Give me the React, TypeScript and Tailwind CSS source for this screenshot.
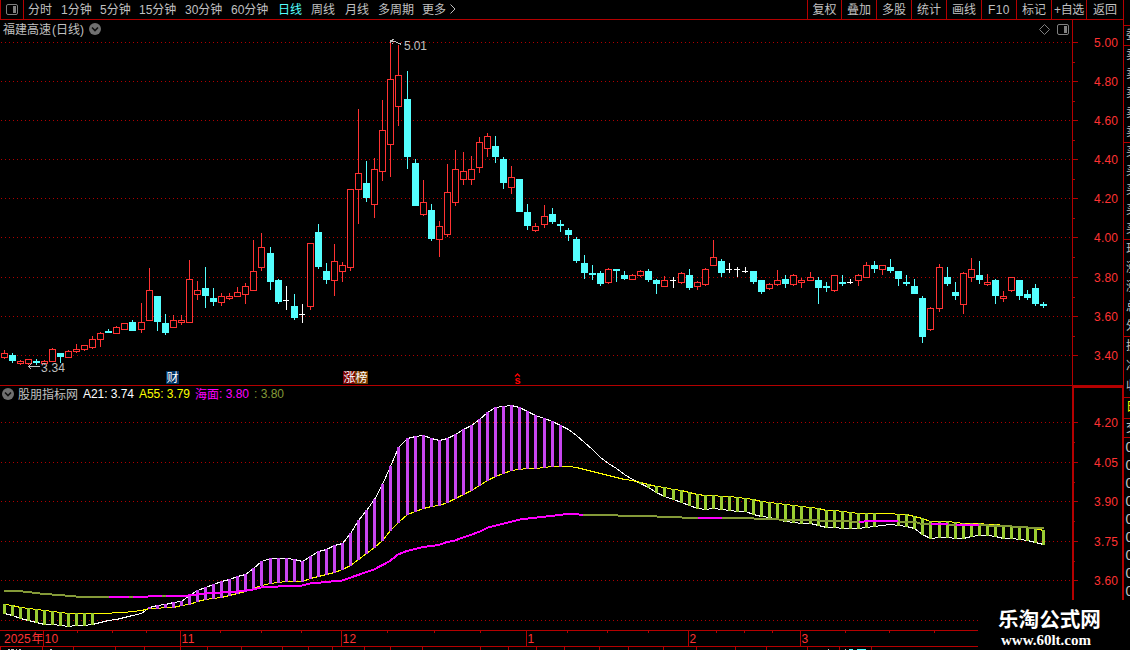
import React from "react";

type Kind = "r" | "c" | "w";
type Candle = [Kind, number, number, number, number];

// kind, high, body top, body bottom, low
const candles: Candle[] = [
  ["r", 350, 353, 357, 358], ["c", 353, 355, 360, 362], ["r", 360, 361, 363, 364], ["r", 359, 359, 363, 364],
  ["c", 359, 361, 362, 364], ["r", 360, 361, 363, 364], ["r", 348, 349, 361, 361], ["c", 353, 353, 356, 362],
  ["r", 350, 351, 357, 357], ["r", 344, 349, 351, 352], ["r", 345, 345, 349, 350], ["r", 336, 339, 347, 348],
  ["r", 332, 333, 339, 346], ["c", 329, 331, 332, 332], ["r", 326, 327, 333, 333], ["r", 323, 323, 329, 329],
  ["c", 320, 322, 330, 330], ["r", 303, 322, 329, 332], ["r", 268, 290, 320, 320], ["c", 296, 296, 321, 330],
  ["c", 314, 323, 332, 334], ["r", 315, 320, 327, 327], ["r", 315, 320, 322, 324], ["r", 260, 279, 322, 322],
  ["r", 281, 290, 294, 299], ["c", 267, 288, 295, 307], ["c", 288, 298, 301, 305], ["r", 293, 296, 302, 305],
  ["r", 293, 296, 298, 299], ["r", 287, 292, 296, 296], ["r", 283, 286, 294, 303], ["r", 240, 271, 290, 290],
  ["r", 233, 247, 267, 270], ["c", 247, 253, 281, 289], ["c", 279, 280, 301, 303], ["w", 286, 300, 300, 309],
  ["c", 294, 306, 317, 319], ["w", 304, 314, 314, 322], ["r", 243, 243, 306, 309], ["c", 224, 232, 266, 268],
  ["c", 263, 271, 279, 283], ["r", 244, 261, 280, 295], ["r", 262, 265, 271, 281], ["r", 189, 189, 267, 270],
  ["r", 109, 173, 189, 223], ["c", 161, 183, 197, 201], ["r", 158, 169, 204, 217], ["r", 100, 130, 171, 180],
  ["r", 42, 79, 144, 176], ["r", 45, 75, 106, 125], ["c", 71, 99, 156, 168], ["c", 159, 163, 205, 205],
  ["r", 180, 202, 214, 215], ["c", 204, 210, 238, 240], ["r", 221, 226, 239, 256], ["r", 164, 192, 234, 236],
  ["r", 150, 169, 202, 205], ["r", 152, 171, 179, 184], ["r", 156, 169, 179, 184], ["r", 137, 142, 167, 172],
  ["r", 133, 136, 148, 156], ["c", 136, 146, 156, 162], ["c", 157, 159, 182, 188], ["r", 166, 177, 187, 193],
  ["c", 179, 179, 211, 211], ["c", 204, 212, 225, 229], ["r", 223, 226, 230, 231], ["r", 205, 216, 224, 227],
  ["c", 208, 214, 221, 223], ["c", 220, 224, 225, 231], ["c", 228, 230, 234, 240], ["c", 237, 239, 260, 262],
  ["c", 255, 263, 272, 278], ["c", 265, 273, 274, 279], ["c", 271, 273, 283, 285], ["r", 268, 269, 282, 283],
  ["c", 269, 269, 270, 281], ["c", 271, 275, 278, 279], ["r", 274, 275, 279, 279], ["r", 270, 271, 275, 276],
  ["c", 269, 271, 279, 281], ["c", 279, 280, 283, 293], ["r", 276, 280, 286, 286], ["w", 277, 280, 280, 287],
  ["r", 272, 273, 282, 283], ["c", 269, 275, 287, 289], ["r", 281, 282, 286, 289], ["r", 268, 269, 284, 285],
  ["r", 240, 257, 265, 265], ["c", 259, 261, 272, 276], ["w", 263, 269, 269, 272], ["w", 267, 269, 269, 276],
  ["w", 267, 271, 271, 272], ["c", 271, 271, 281, 283], ["c", 280, 280, 291, 293], ["r", 283, 284, 288, 289],
  ["r", 270, 280, 284, 285], ["c", 275, 279, 283, 287], ["r", 274, 275, 284, 285], ["r", 278, 280, 282, 287],
  ["r", 272, 277, 280, 280], ["c", 277, 280, 287, 303], ["c", 282, 286, 287, 291], ["r", 275, 275, 290, 291],
  ["c", 275, 282, 283, 285], ["w", 279, 282, 282, 283], ["r", 274, 275, 280, 285], ["r", 262, 265, 277, 277],
  ["c", 261, 265, 268, 272], ["r", 265, 265, 269, 274], ["c", 259, 267, 270, 272], ["c", 271, 271, 278, 285],
  ["c", 275, 282, 283, 285], ["c", 279, 286, 293, 293], ["c", 296, 298, 336, 342], ["r", 307, 308, 329, 330],
  ["r", 264, 267, 308, 311], ["c", 267, 277, 283, 285], ["c", 282, 292, 295, 299], ["r", 272, 273, 304, 313],
  ["r", 258, 269, 277, 281], ["c", 261, 275, 279, 283], ["r", 274, 282, 284, 285], ["c", 279, 280, 295, 303],
  ["r", 291, 296, 298, 301], ["r", 277, 277, 290, 291], ["c", 280, 280, 295, 299], ["c", 290, 294, 297, 299],
  ["c", 284, 288, 303, 305], ["c", 302, 304, 305, 307],
];

const a21 = [
  613, 615, 618, 620, 622, 624, 624.5, 625.5, 626, 625.5, 625, 624, 622, 620, 619, 617, 615, 613, 607, 605,
  604, 602, 601, 595, 590.5, 587.5, 584, 581.5, 579, 576.5, 574, 568, 561.5, 558.5, 558, 558, 559.5, 561, 556, 551,
  549, 545, 543, 533, 520, 510, 499, 484, 466, 447, 438, 436, 435, 438, 440, 438, 434, 429, 425, 419,
  412, 407, 406, 405, 407, 411, 415.5, 418, 421, 425, 429.5, 435, 442, 449, 457, 463, 468, 474, 479, 483,
  487.5, 492.5, 496.5, 499.5, 502, 505, 508.5, 509.5, 508.5, 509.5, 510.5, 511, 511.5, 514, 516.5, 517.5, 519, 521, 522.5, 523,
  523.5, 525.5, 527.5, 527.5, 528.5, 528, 528, 527.5, 526.5, 525, 524, 525, 526.5, 528.5, 534.5, 538, 537.5, 537.5, 538, 538,
  536.5, 535.5, 535.5, 536.5, 538, 538, 539, 540, 542, 544,
];

const a55 = [
  604, 605, 607, 608, 609, 610, 611, 612, 613, 613, 613, 613, 613, 613, 612, 612, 611, 610.5, 608, 608,
  607, 607, 605.5, 604, 601.5, 599.5, 598, 597, 595.5, 593.5, 591.5, 588.5, 585, 583, 582, 581, 581, 581, 578.5, 576,
  574, 572, 569.5, 565, 559, 553.5, 547.5, 540.5, 530.5, 522, 514.5, 511.5, 508.5, 506.5, 505.5, 502.5, 498.5, 494.5, 490.5, 485.5,
  480.5, 476.5, 473, 470.5, 469.5, 468, 468, 467, 466.5, 466, 466, 467.5, 469, 471.5, 473, 475, 477, 479, 480.5, 482.5,
  484, 486, 487, 489, 490, 492, 494, 495, 495, 496, 496, 497, 498, 499.5, 501, 502, 503, 504, 505, 506,
  507, 508.5, 510, 510, 511, 512, 513, 513, 513, 513, 513, 514, 514.5, 516, 518.5, 521, 521, 521, 522, 523,
  523, 523, 524, 524.5, 525.5, 526, 527, 527.5, 528.5, 530,
];

const sea: [number, number][] = [
  [4, 590], [12, 590], [28, 591.5], [44, 593.5], [60, 594.5], [76, 596], [109, 596], [148, 596], [150, 595], [188, 595],
  [205, 593], [237, 591], [253, 589], [261, 587], [278, 586], [302, 585], [310, 583], [342, 580], [374, 569], [390, 560.5],
  [398, 554], [407, 550.5], [423, 546.5], [439, 544.5], [447, 541.5], [455, 540], [463, 537], [472, 534], [480, 531], [488, 527],
  [500, 524], [520, 519], [537, 517], [560, 514.5], [570, 513], [576, 513], [579, 514], [616, 514], [618, 515], [656, 515], [657, 516],
  [681, 516], [682, 517], [753, 517], [754, 518], [777, 518], [779, 519], [817, 519], [819, 520], [850, 520], [852, 521],
  [864, 521], [866, 520], [898, 520], [899, 521], [914, 521], [920, 523], [947, 523], [949, 524], [987, 524], [989, 525],
  [1010, 525], [1012, 526], [1026, 526], [1028, 527], [1044, 527],
];
const magenta: [number, number][] = [
  [109, 129], [133, 162], [166, 583], [698, 722], [859, 898], [931, 948], [956, 979],
];

const cx = (i: number) => Math.floor(4.02 + i * 8.0602);
const line = (v: number[]) => v.map((y, i) => `${cx(i) + 0.5},${Math.floor(y) + 0.5}`).join(" ");
const seaPoints = sea.map(([x, y]) => `${x},${y + 0.5}`).join(" ");

const priceRows = [42, 81, 120, 159, 198, 237, 277, 316, 355];
const priceTexts = ["5.00", "4.80", "4.60", "4.40", "4.20", "4.00", "3.80", "3.60", "3.40"];
const lowRows = [422, 462, 501, 541, 580];
const lowTexts = ["4.20", "4.05", "3.90", "3.75", "3.60"];

const periods: [string, string][] = [
  ["分时", "w-[33px]"], ["1分钟", "w-[39px]"], ["5分钟", "w-[39px]"], ["15分钟", "w-[46px]"],
  ["30分钟", "w-[46px]"], ["60分钟", "w-[47px]"], ["日线", "w-[33px] text-[#54ffff]"], ["周线", "w-[34px]"],
  ["月线", "w-[33px]"], ["多周期", "w-[44px]"], ["更多", "w-[27px]"],
];
const tools: [string, string][] = [
  ["复权", "w-[34px]"], ["叠加", "w-[35px]"], ["多股", "w-[35px]"], ["统计", "w-[35px]"], ["画线", "w-[35px]"],
  ["F10", "w-[35px] tracking-[0.4px]"], ["标记", "w-[35px]"], ["+自选", "w-[35px] tracking-[-0.3px]"],
  ["返回", "w-[38px] border-r"],
];

function Grid({ rows, end = 1072 }: { rows: number[]; end?: number }) {
  return (
    <g stroke="#b00000" strokeDasharray="1 3" shapeRendering="crispEdges">
      {rows.map((y) => <line key={y} x1={1} x2={end} y1={y + 0.5} y2={y + 0.5} />)}
    </g>
  );
}

function Axis({ rows, texts, minor }: { rows: number[]; texts: string[]; minor: number[] }) {
  return (
    <g>
      <g fill="#b40000" shapeRendering="crispEdges">
        {rows.map((y) => <rect key={y} x={1073} y={y} width={5} height={1} />)}
        {minor.map((y) => <rect key={y} x={1073} y={y} width={2} height={1} />)}
      </g>
      {rows.map((y, i) => (
        <text key={y} x={1094} y={y + 5} fontSize={12} fill="#ff3232" textLength={24}>{texts[i]}</text>
      ))}
    </g>
  );
}

function Toggle({ x, y }: { x: number; y: number }) {
  return (
    <g transform={`translate(${x} ${y})`}>
      <circle cx={6} cy={6} r={6} fill="#707070" />
      <path d="M3 4.5 6 7.5 9 4.5" fill="none" stroke="#101010" strokeWidth={1.6} />
    </g>
  );
}

function SplitIcon() {
  return (
    <svg width="12" height="11" viewBox="0 0 12 11">
      <rect x="0.5" y="0.5" width="11" height="10" rx="1.5" fill="none" stroke="#808080" />
      <rect x="7" y="2" width="3" height="7" fill="#808080" />
    </svg>
  );
}

function Toolbar() {
  return (
    <header className="flex h-5 shrink-0 border-b border-[#b40000] text-[12px] leading-[20px] whitespace-nowrap">
      <div className="flex w-6 items-center justify-center border-x border-[#b40000] pb-px"><SplitIcon /></div>
      <nav className="flex flex-1 pl-[4px]">
        {periods.map(([t, c]) => <span key={t} className={c}>{t}</span>)}
        <svg className="mt-1" width="8" height="10" viewBox="0 0 8 10"><path d="M1.5.5 6 5 1.5 9.5" fill="none" stroke="#c0c0c0" /></svg>
      </nav>
      <div className="flex">
        {tools.map(([t, c]) => (
          <span key={t} className={`${c} flex justify-center border-l border-[#b40000]`}>{t}</span>
        ))}
      </div>
    </header>
  );
}

const candleColor = { r: "#ff3232", c: "#54ffff", w: "#ffffff" };

function PriceChart() {
  return (
    <svg className="block shrink-0" width="1124" height="366" viewBox="0 20 1124 366">
      <Grid rows={priceRows} />
      <g fill="#b40000" shapeRendering="crispEdges">
        <rect x={1072} y={20} width={1} height={366} />
        <rect x={0} y={385} width={1124} height={1} />
        <rect x={1123} y={20} width={1} height={366} />
      </g>
      <Axis rows={priceRows} texts={priceTexts} minor={[62, 101, 140, 179, 218, 257, 297, 336]} />
      <g shapeRendering="crispEdges">
        {candles.map(([k, h, t, b, l], i) => {
          const x = cx(i);
          return (
            <g key={i} fill={candleColor[k]}>
              <rect x={x} y={h} width={1} height={l - h + 1} />
              {k === "r" ? (
                <rect x={x - 2.5} y={t + 0.5} width={6} height={b - t} fill="#000" stroke="#ff3232" />
              ) : (
                <rect x={x - 3} y={t} width={k === "w" ? 6 : 7} height={b - t + 1} />
              )}
            </g>
          );
        })}
      </g>
      <g fill="none" stroke="#c0c0c0" shapeRendering="crispEdges">
        <path d="M390.5 43V40.5H393 M391.5 39.5H394 M391 41.5H395 L401.5 44.5 M391.5 43.5H393" />
        <path d="M28 366.5H40 M31.5 363.5 28.5 366.5 31.5 369.5" />
      </g>
      <g fontSize={12} fill="#c0c0c0">
        <text x={404} y={50} textLength={23}>5.01</text>
        <text x={41} y={372} textLength={24}>3.34</text>
        <text x={3} y={34}>福建高速</text>
        <text x={52} y={34} textLength={32}>(日线)</text>
      </g>
      <Toggle x={89} y={23} />
      <path d="M1044.5 24.5 1049.5 29.5 1044.5 34.5 1039.5 29.5Z" fill="none" stroke="#808080" />
      <g transform="translate(1057 24)">
        <rect x="0.5" y="0.5" width="11" height="10" rx="1.5" fill="none" stroke="#808080" />
        <rect x="7" y="2" width="3" height="7" fill="#808080" />
      </g>
      <rect x={166} y={371} width={13} height={13} fill="#003264" />
      <rect x={343} y={371} width={12} height={13} fill="#780000" />
      <rect x={355} y={371} width={13} height={13} fill="#7a3c00" />
      <g fontSize={12} fill="#fff">
        <text x={166.5} y={382}>财</text>
        <text x={343.5} y={382}>涨榜</text>
      </g>
      <path d="M515 376.5 517.5 374 520 376.5" fill="none" stroke="#ff0000" strokeWidth={1.3} />
      <text x={514.5} y={384} fontSize={11} fontWeight={700} fill="#ff0000">s</text>
    </svg>
  );
}

function Indicator() {
  const bars = a21.map((w, i) => {
    const up = i >= 18 && i <= 69;
    const down = i <= 11 || (i >= 79 && i <= 108) || i >= 111;
    if (!up && !down) return null;
    const top = Math.floor(Math.min(w, a55[i]));
    const bottom = Math.floor(Math.max(w, a55[i]));
    return <rect key={i} x={cx(i) - 1} y={top} width={3} height={bottom - top + 1} fill={up ? "#c846f0" : "#9acd32"} />;
  });
  return (
    <svg className="block shrink-0" width="1124" height="244" viewBox="0 386 1124 244">
      <defs>
        <clipPath id="rise">
          {magenta.map(([a, b]) => <rect key={a} x={a} y={386} width={b - a} height={244} />)}
        </clipPath>
      </defs>
      <Grid rows={[...lowRows, 620]} />
      <g fill="none" shapeRendering="crispEdges">
        <polyline points={line(a21)} stroke="#fff" />
        <polyline points={line(a55)} stroke="#ffff00" />
        {bars}
        <polyline points={seaPoints} stroke="#849a38" strokeWidth={2} />
        <polyline points={seaPoints} stroke="#ff00ff" strokeWidth={2} clipPath="url(#rise)" />
      </g>
      <path d="M1073 600V387H1123V600" fill="none" stroke="#b40000" strokeWidth={2} shapeRendering="crispEdges" />
      <Axis rows={lowRows} texts={lowTexts} minor={[442, 482, 521, 561]} />
      <Toggle x={2} y={388} />
      <g fontSize={12}>
        <text x={18} y={399} fill="#c0c0c0">股朋指标网</text>
        <text x={83} y={398} fill="#fff" textLength={51}>A21: 3.74</text>
        <text x={139} y={398} fill="#ffff00" textLength={51}>A55: 3.79</text>
        <text x={195} y={399} fill="#ff00ff">海面</text>
        <text x={219} y={398} fill="#ff00ff" textLength={30}>: 3.80</text>
        <text x={254} y={398} fill="#849a38" textLength={30}>: 3.80</text>
      </g>
    </svg>
  );
}

const months: [number, string][] = [[43, "10"], [180, "11"], [341, "12"], [526, "1"], [688, "2"], [800, "3"]];
const weekTicks = [77, 112, 146, 220, 261, 301, 387, 434, 480, 567, 607, 648, 716, 744, 772, 845, 889, 934];
const tabTicks = [0, 42, 73, 115, 144, 180, 207, 241, 282, 308, 332, 364, 390, 422, 480, 508, 536, 564, 599, 628, 663, 696, 735, 766, 807, 839, 871];

function TimeAxis() {
  return (
    <svg className="block shrink-0" width="978" height="20" viewBox="0 630 978 20">
      <g fill="#b40000" shapeRendering="crispEdges">
        <rect x={0} y={630} width={978} height={1} />
        <rect x={0} y={646} width={978} height={1} />
        {months.map(([x]) => <rect key={x} x={x} y={630} width={1} height={17} />)}
        {weekTicks.map((x) => <rect key={x} x={x} y={630} width={1} height={3} />)}
        {tabTicks.map((x) => <rect key={x} x={x} y={647} width={1} height={3} />)}
      </g>
      <g fontSize={12} fill="#ff3232">
        <text x={4} y={643}>2025</text>
        <text x={31.5} y={643}>年</text>
        {months.map(([x, t]) => <text key={x} x={x + 1.5} y={643} letterSpacing={0.4}>{t}</text>)}
      </g>
      <g fill="#c0c0c0" shapeRendering="crispEdges">
        <path d="M8 649h2v1h-2zM11 649h3v1h-3zM16 649h1v1h-1zM19 649h2v1h-2zM50 649h2v1h-2zM828 649h1v1h-1zM845 649h1v1h-1z" />
        <path d="M849 649h4v1h-4zM857 649h9v1h-9z" fill="#54ffff" />
      </g>
    </svg>
  );
}

const quoteRows: [string, string][] = [
  ["委", "h-5 border-b border-[#b40000]"],
  ["卖", "h-[19px]"], ["卖", "h-[19px]"], ["卖", "h-[20px]"], ["卖", "h-[19px]"], ["卖", "h-[20px] border-b border-[#b40000]"],
  ["买", "h-[19px]"], ["买", "h-[19px]"], ["买", "h-[20px]"], ["买", "h-[19px]"], ["买", "h-[20px] border-b border-[#b40000]"],
  ["现", "h-[19px]"], ["涨", "h-[19px]"], ["涨", "h-[20px]"], ["总", "h-[19px]"], ["外", "h-[20px] border-b border-[#b40000]"],
  ["换", "h-[20px]"], ["净", "h-[20px]"], ["收", "h-[21px] border-b border-[#b40000]"],
  ["日", "h-[21px] border-b border-[#b40000] text-[#ffff00]"],
  ["交", "h-[19px] border-b border-[#b40000]"],
];

function QuoteStrip() {
  return (
    <aside className="flex w-[6px] shrink-0 flex-col overflow-hidden text-[12px] leading-[18px]">
      <div className="h-[26px] shrink-0 border-b border-[#b40000]" />
      {quoteRows.map(([t, c], i) => <div key={i} className={`${c} shrink-0 pl-[2px]`}>{t}</div>)}
      {[0, 1, 2, 3, 4, 5, 6, 7, 8].map((i) => <div key={i} className="h-[18px] shrink-0 pl-[1.5px] text-[14px]">0</div>)}
    </aside>
  );
}

export default function App() {
  return (
    <div className="relative flex h-[650px] w-[1130px] overflow-hidden bg-black font-['Liberation_Sans','Noto_Sans_CJK_SC',sans-serif] text-[#c0c0c0]">
      <main className="flex w-[1124px] shrink-0 flex-col">
        <Toolbar />
        <PriceChart />
        <Indicator />
        <TimeAxis />
      </main>
      <QuoteStrip />
      <div className="absolute top-[600px] left-[978px] flex h-[50px] w-[152px] flex-col bg-black pt-[8px] text-white">
        <span className="pl-[20px] text-[20.6px] leading-[24px] font-bold whitespace-nowrap">乐淘公式网</span>
        <span className="pl-[23px] font-['Liberation_Serif',serif] text-[15px] leading-[16px] font-bold">www.60lt.com</span>
      </div>
    </div>
  );
}
